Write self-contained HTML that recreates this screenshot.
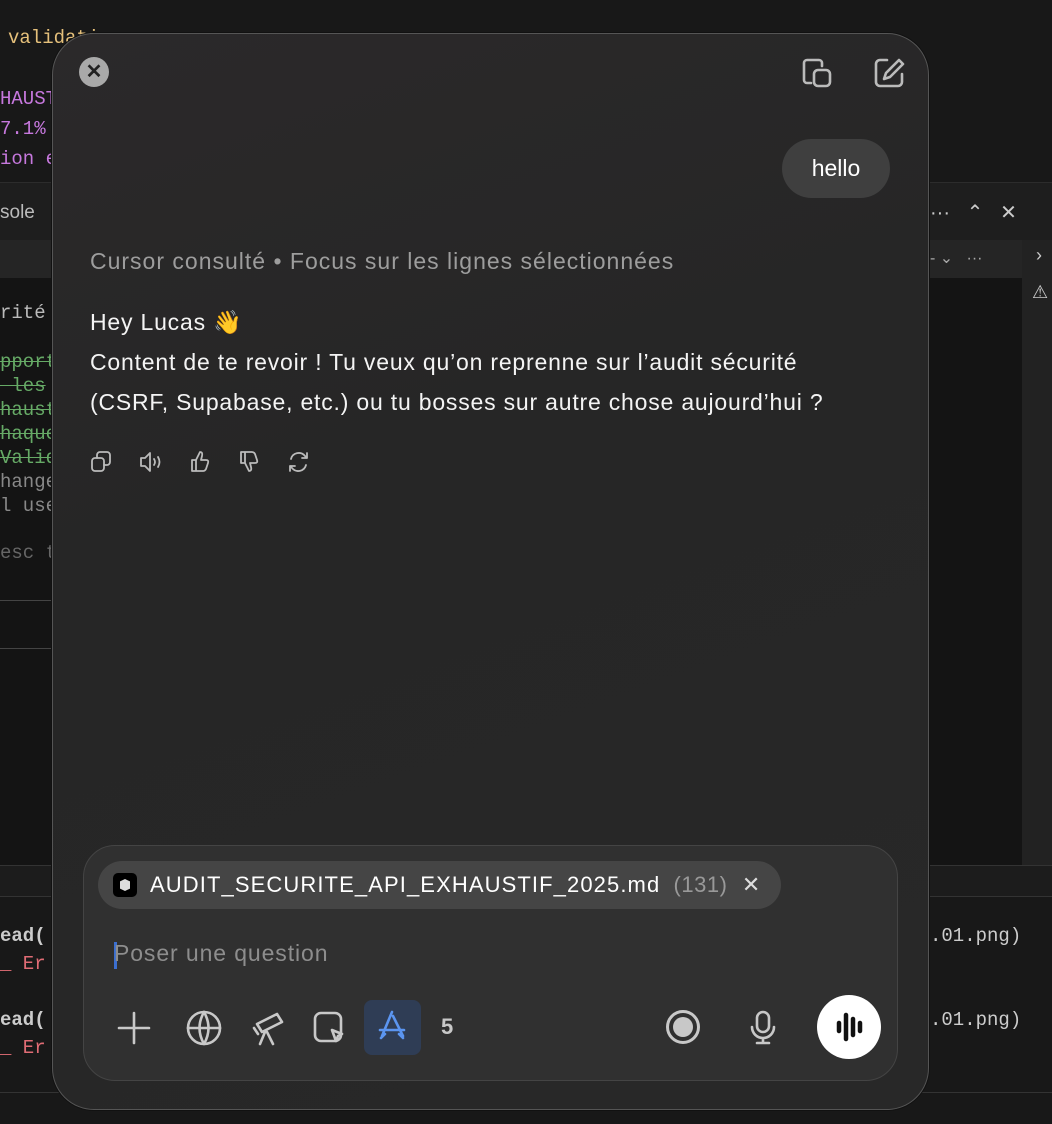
<!DOCTYPE html><html><head><meta charset="utf-8"><style>
body{margin:0;width:1052px;height:1124px;background:#181818;position:relative;overflow:hidden;font-family:"Liberation Sans",sans-serif}
.m{font-family:"Liberation Mono",monospace;font-size:19px;position:absolute;white-space:pre}
.a{position:absolute}
</style></head><body>
<div class="a" style="left:0;top:182px;width:1052px;height:58px;background:#1e1e1e;border-top:1px solid #2c2c2c"></div>
<div class="a" style="left:0;top:240px;width:1052px;height:38px;background:#252525"></div>
<div class="a" style="left:0;top:278px;width:1052px;height:590px;background:#141414"></div>
<div class="a" style="left:1022px;top:240px;width:30px;height:625px;background:#222"></div>
<div class="a" style="left:0;top:865px;width:1052px;height:30px;background:#1c1c1c;border-top:1px solid #333;border-bottom:1px solid #333"></div>
<div class="a" style="left:0;top:1092px;width:1052px;height:1px;background:#333"></div>
<div class="a" style="left:0;top:600px;width:60px;height:1px;background:#444"></div>
<div class="a" style="left:0;top:648px;width:60px;height:1px;background:#444"></div>
<div class="m" style="left:8px;top:27px;color:#e5c07b">validati</div>
<div class="m" style="left:0;top:88px;color:#c678dd">HAUST</div>
<div class="m" style="left:0;top:118px;color:#c678dd">7.1%</div>
<div class="m" style="left:0;top:148px;color:#c678dd">ion e</div>
<div class="a" style="left:0;top:202px;color:#bbb;font-size:19px">sole</div>
<div class="m" style="left:0;top:302px;color:#bbb">rité</div>
<div class="m" style="left:0;top:350px;color:#6a6;line-height:24px;text-decoration:line-through">pport
 les
haust
haque
Valid</div>
<div class="m" style="left:0;top:470px;color:#888;line-height:24px">hange
l use</div>
<div class="m" style="left:0;top:542px;color:#666">esc t</div>
<div class="m" style="left:0;top:925px;color:#ccc;font-weight:bold">ead(</div>
<div class="m" style="left:0;top:953px;color:#e06c75">_ Er</div>
<div class="m" style="left:0;top:1009px;color:#ccc;font-weight:bold">ead(</div>
<div class="m" style="left:0;top:1037px;color:#e06c75">_ Er</div>
<div class="m" style="left:930px;top:925px;color:#ccc">.01.png)</div>
<div class="m" style="left:930px;top:1009px;color:#ccc">.01.png)</div>
<div class="a" style="left:930px;top:200px;color:#ccc;font-size:20px">···&nbsp;&nbsp;&nbsp;⌃&nbsp;&nbsp;&nbsp;✕</div>
<div class="a" style="left:930px;top:248px;color:#aaa;font-size:16px">- ⌄&nbsp;&nbsp;&nbsp;···</div>
<div class="a" style="left:1036px;top:245px;color:#ccc;font-size:18px">›</div>
<div class="a" style="left:1032px;top:282px;color:#ccc;font-size:18px">⚠</div>

<div class="a" style="left:52px;top:33px;width:875px;height:1075px;border-radius:42px;background:linear-gradient(160deg,#2b292a,#262626 40%,#282828);border:1px solid #555;box-shadow:0 0 0 1px #111"></div>
<div class="a" style="left:79px;top:57px;width:30px;height:30px;border-radius:50%;background:#a9a9a9;color:#222;font-size:20px;text-align:center;line-height:30px;font-weight:bold">✕</div>
<svg class="a" style="left:801px;top:56px" width="34" height="34" viewBox="0 0 34 34" fill="none" stroke="#bbb" stroke-width="2.6" stroke-linecap="round"><path d="M10 27H6a3 3 0 0 1-3-3V7a3 3 0 0 1 3-3h12a3 3 0 0 1 3 3v3"/><rect x="13" y="14" width="16" height="16" rx="4"/></svg>
<svg class="a" style="left:872px;top:56px" width="34" height="34" viewBox="0 0 34 34" fill="none" stroke="#bbb" stroke-width="2.6" stroke-linecap="round" stroke-linejoin="round"><path d="M15 4H8a4 4 0 0 0-4 4v18a4 4 0 0 0 4 4h18a4 4 0 0 0 4-4v-8"/><path d="M27 4l4 4-13 13-6 2 2-6z"/></svg>
<div class="a" style="left:782px;top:139px;width:108px;height:59px;border-radius:30px;background:#3f3f3f;color:#fff;font-size:23px;text-align:center;line-height:59px">hello</div>
<div class="a" style="left:90px;top:248px;color:#9d9d9d;font-size:23px;letter-spacing:1px;white-space:nowrap">Cursor consulté • Focus sur les lignes sélectionnées</div>
<div class="a" style="left:90px;top:302px;color:#f4f4f4;font-size:23px;letter-spacing:0.8px;line-height:40px;white-space:nowrap">Hey Lucas 👋<br>Content de te revoir ! Tu veux qu’on reprenne sur l’audit sécurité<br>(CSRF, Supabase, etc.) ou tu bosses sur autre chose aujourd’hui ?</div>
<svg class="a" style="left:90px;top:450px" width="230" height="24" fill="none" stroke="#bbb" stroke-width="1.8" stroke-linecap="round" stroke-linejoin="round">
<rect x="2" y="8" width="12" height="13" rx="3"/><path d="M7 8V5a3 3 0 0 1 3-3h7a3 3 0 0 1 3 3v7a3 3 0 0 1-3 3h-3"/>
<path d="M51 8h4l5-5v18l-5-5h-4z"/><path d="M64 9q2 3 0 6M68 7q3 5 0 10"/>
<path d="M102 10h4v11h-4zM106 10l4-8q3 0 2 4l-1 4h5q3 0 2 3l-2 6q-1 2-3 2h-7"/>
<path d="M151 13h4V2h-4zM155 13l4 8q3 0 2-4l-1-4h5q3 0 2-3l-2-6q-1-2-3-2h-7"/>
<path d="M201 9a8 8 0 0 1 14-3l2 2M217 3v5h-5M216 15a8 8 0 0 1-14 3l-2-2M200 21v-5h5"/></svg>

<div class="a" style="left:83px;top:845px;width:813px;height:234px;border-radius:32px;background:#303030;border:1px solid #444"></div>
<div class="a" style="left:98px;top:861px;width:683px;height:48px;border-radius:24px;background:#454545"></div>
<div class="a" style="left:113px;top:873px;width:24px;height:24px;border-radius:5px;background:#000"><div style="margin:6px 7px;width:10px;height:12px;background:#ddd;clip-path:polygon(0 20%,50% 0,100% 20%,100% 80%,50% 100%,0 80%)"></div></div>
<div class="a" style="left:150px;top:872px;color:#fff;font-size:22px;letter-spacing:1.1px;white-space:nowrap">AUDIT_SECURITE_API_EXHAUSTIF_2025.md<span style="color:#999;letter-spacing:0.5px">&nbsp;&nbsp;(131)</span><span style="color:#ddd">&nbsp;&nbsp;✕</span></div>
<div class="a" style="left:114px;top:942px;width:3px;height:27px;background:#3b6fd0"></div>
<div class="a" style="left:114px;top:940px;color:#8d8d8d;font-size:23px;letter-spacing:0.9px">Poser une question</div>
<svg class="a" style="left:110px;top:1000px" width="360" height="56" fill="none" stroke="#c8c8c8" stroke-width="2.6" stroke-linecap="round" stroke-linejoin="round">
<path d="M24 13v30M9 28h30"/>
<circle cx="94" cy="28" r="16"/><path d="M78 28h32M94 12q-9 16 0 32M94 12q9 16 0 32"/>
<path d="M147 24l20-10 5 8-20 10zM155 32l-5 12M157 32l6 12M144 28l4 6"/>
<rect x="205" y="13" width="26" height="28" rx="6"/><path d="M222 30l10 4-4 2-2 5z"/>
<rect x="254" y="0" width="57" height="55" rx="8" fill="#2f3d55" stroke="none"/>
<path d="M282 12l-10 24M283 16l10 20M270 30h24M271 38l4-4M293 38l-4-4" stroke="#5b95f0"/></svg>
<div class="a" style="left:441px;top:1014px;color:#c8c8c8;font-size:22px;font-weight:bold">5</div>
<div class="a" style="left:666px;top:1010px;width:28px;height:28px;border-radius:50%;border:3px solid #c8c8c8;box-sizing:content-box;"><div style="margin:4px;width:20px;height:20px;border-radius:50%;background:#c8c8c8"></div></div>
<svg class="a" style="left:748px;top:1010px" width="30" height="36" fill="none" stroke="#c8c8c8" stroke-width="2.6" stroke-linecap="round"><rect x="9" y="2" width="12" height="20" rx="6"/><path d="M4 17a11 11 0 0 0 22 0M15 28v5M9 33h12"/></svg>
<div class="a" style="left:817px;top:995px;width:64px;height:64px;border-radius:50%;background:#fff"></div>
<svg class="a" style="left:817px;top:995px" width="64" height="64" stroke="#111" stroke-width="4.5" stroke-linecap="round"><path d="M22 28v8M29 20v24M36 24v16M43 28v8"/></svg>
</body></html>
